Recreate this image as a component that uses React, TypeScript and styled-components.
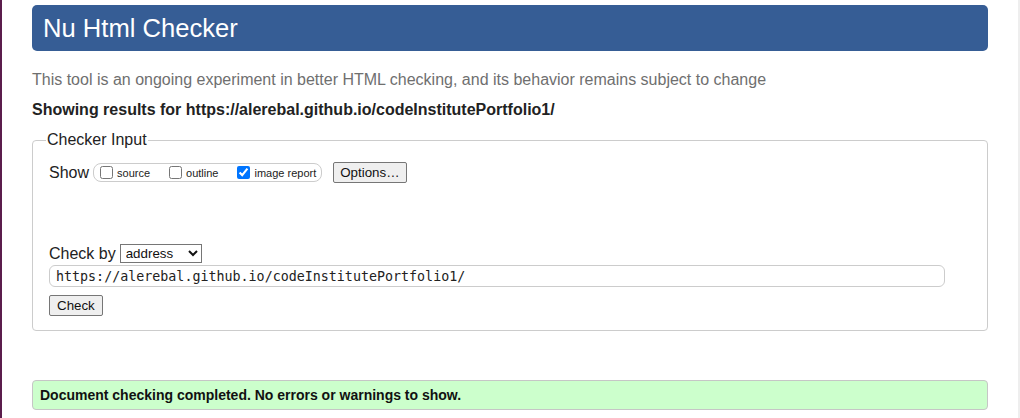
import React from "react";
import styled, { createGlobalStyle } from "styled-components";

const Global = createGlobalStyle`
  html, body { margin: 0; padding: 0; background: #fff; }
  body { font-family: "Liberation Sans", Arial, sans-serif; color: #222; }
`;

const Page = styled.div`
  box-sizing: border-box;
  width: 1020px;
  height: 418px;
  border-left: 2px solid #5b1d4c;
  border-right: 2px solid #eeeeee;
  padding: 5px 30px 0 30px;
  overflow: hidden;
`;

const Header = styled.h1`
  margin: 0;
  height: 46px;
  box-sizing: border-box;
  background: #365d95;
  border-radius: 5px;
  color: #fff;
  font-weight: normal;
  font-size: 25.6px;
  line-height: 46px;
  padding-left: 11px;
`;

const Intro = styled.p`
  margin: 19px 0 0 0;
  color: #6f6f6f;
  font-size: 16px;
  line-height: 20px;
`;

const Results = styled.p`
  margin: 10px 0 0 0;
  font-weight: bold;
  font-size: 16px;
  line-height: 20px;
  color: #222;
`;

const Fieldset = styled.fieldset`
  margin: 11px 0 0 0;
  padding: 13px 16px 14px 16px;
  border: 1px solid #cccccc;
  border-radius: 4px;
  min-width: 0;
`;

const Legend = styled.legend`
  font-size: 16px;
  padding: 0 1px;
  margin-left: -3px;
  color: #222;
`;

const Row = styled.div`
  display: flex;
  align-items: center;
  font-size: 16px;
`;

const Label = styled.span`
  font-size: 16px;
  color: #222;
  margin-right: 4px;
`;

const Group = styled.div`
  display: flex;
  align-items: center;
  height: 19px;
  box-sizing: border-box;
  border: 1px solid #cccccc;
  border-radius: 8px;
  padding: 0 5px 0 6px;
  gap: 19px;
`;

const CheckLabel = styled.label`
  display: flex;
  align-items: center;
  font-size: 11px;
  color: #222;
  gap: 4px;
`;

const Box = styled.input`
  margin: 0;
  width: 13px;
  height: 13px;
`;

const Button = styled.button`
  font-family: "Liberation Sans", Arial, sans-serif;
  font-size: 13.33px;
  color: #111;
  background: #efefef;
  border: 1px solid #767676;
  border-radius: 2px;
  height: 21px;
  padding: 0 6px;
  box-sizing: border-box;
`;

const OptionsButton = styled(Button)`
  margin-left: 11px;
`;

const Spacer = styled.div`
  height: 61px;
`;

const Select = styled.select`
  font-family: "Liberation Sans", Arial, sans-serif;
  font-size: 13.33px;
  width: 82px;
  height: 19px;
  border: 1px solid #767676;
  border-radius: 0;
  background: #fff;
  color: #111;
  padding: 0 0 0 1px;
`;

const UrlInput = styled.input`
  display: block;
  box-sizing: border-box;
  width: 896px;
  height: 22px;
  margin-top: 2px;
  border: 1px solid #cccccc;
  border-radius: 6px;
  font-family: "DejaVu Sans Mono", "Liberation Mono", monospace;
  font-size: 13.33px;
  color: #222;
  padding: 0 6px;
`;

const CheckButton = styled(Button)`
  margin-top: 8px;
  padding: 0 7px;
`;

const Success = styled.div`
  margin-top: 49px;
  box-sizing: border-box;
  height: 30px;
  background: #ccffcc;
  border: 1px solid #c6c6c6;
  border-radius: 4px;
  padding-left: 7px;
  display: flex;
  align-items: center;
  font-weight: bold;
  font-size: 14px;
  color: #111;
`;

export default function App() {
  return (
    <>
      <Global />
      <Page>
        <Header>Nu Html Checker</Header>
        <Intro>
          This tool is an ongoing experiment in better HTML checking, and its behavior remains subject to change
        </Intro>
        <Results>Showing results for https://alerebal.github.io/codeInstitutePortfolio1/</Results>
        <Fieldset>
          <Legend>Checker Input</Legend>
          <Row>
            <Label>Show</Label>
            <Group>
              <CheckLabel>
                <Box type="checkbox" readOnly />
                source
              </CheckLabel>
              <CheckLabel>
                <Box type="checkbox" readOnly />
                outline
              </CheckLabel>
              <CheckLabel>
                <Box type="checkbox" defaultChecked />
                image report
              </CheckLabel>
            </Group>
            <OptionsButton>Options…</OptionsButton>
          </Row>
          <Spacer />
          <Row>
            <Label>Check by</Label>
            <Select defaultValue="address">
              <option value="address">address</option>
            </Select>
          </Row>
          <UrlInput readOnly value="https://alerebal.github.io/codeInstitutePortfolio1/" />
          <CheckButton>Check</CheckButton>
        </Fieldset>
        <Success>Document checking completed. No errors or warnings to show.</Success>
      </Page>
    </>
  );
}
